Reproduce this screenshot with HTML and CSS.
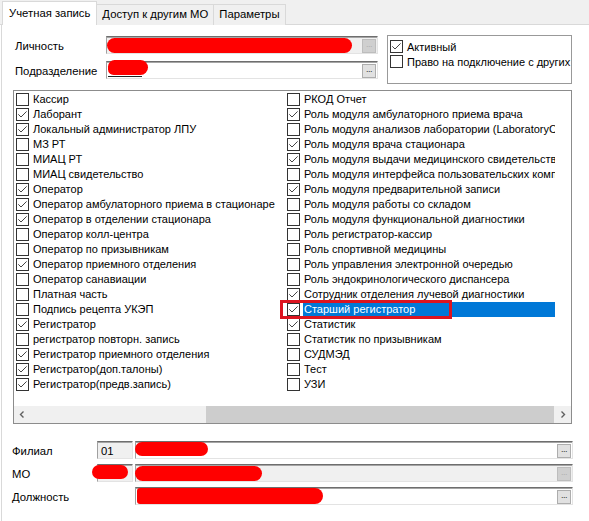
FILE: index.html
```html
<!DOCTYPE html>
<html lang="ru">
<head>
<meta charset="utf-8">
<title>Учетная запись</title>
<link rel="stylesheet" href="styles.css">
</head>
<body>
<div class="tabs">
  <div class="tab active">Учетная запись</div>
  <div class="tab">Доступ к другим МО</div>
  <div class="tab">Параметры</div>
</div>
<div class="panel">
  <div class="top">
    <div class="form">
      <div class="frow"><span class="lbl">Личность</span><div class="field dis wide"><span class="val"></span><span class="btn dis">...</span></div></div>
      <div class="frow"><span class="lbl">Подразделение</span><div class="field wide"><span class="val"></span><span class="btn">...</span></div></div>
    </div>
    <div class="group">
      <div class="gitem"><span class="cb on"></span><span>Активный</span></div>
      <div class="gitem"><span class="cb"></span><span>Право на подключение с других</span></div>
    </div>
  </div>
  <div class="list">
    <div class="items">
      <div class="it"><span class="cb"></span><span class="tx">Кассир</span></div>
      <div class="it"><span class="cb on"></span><span class="tx">Лаборант</span></div>
      <div class="it"><span class="cb on"></span><span class="tx">Локальный администратор ЛПУ</span></div>
      <div class="it"><span class="cb"></span><span class="tx">МЗ РТ</span></div>
      <div class="it"><span class="cb"></span><span class="tx">МИАЦ РТ</span></div>
      <div class="it"><span class="cb"></span><span class="tx">МИАЦ свидетельство</span></div>
      <div class="it"><span class="cb on"></span><span class="tx">Оператор</span></div>
      <div class="it"><span class="cb on"></span><span class="tx">Оператор амбулаторного приема в стационаре</span></div>
      <div class="it"><span class="cb on"></span><span class="tx">Оператор в отделении стационара</span></div>
      <div class="it"><span class="cb"></span><span class="tx">Оператор колл-центра</span></div>
      <div class="it"><span class="cb"></span><span class="tx">Оператор по призывникам</span></div>
      <div class="it"><span class="cb on"></span><span class="tx">Оператор приемного отделения</span></div>
      <div class="it"><span class="cb"></span><span class="tx">Оператор санавиации</span></div>
      <div class="it"><span class="cb"></span><span class="tx">Платная часть</span></div>
      <div class="it"><span class="cb"></span><span class="tx">Подпись рецепта УКЭП</span></div>
      <div class="it"><span class="cb on"></span><span class="tx">Регистратор</span></div>
      <div class="it"><span class="cb"></span><span class="tx">регистратор повторн. запись</span></div>
      <div class="it"><span class="cb on"></span><span class="tx">Регистратор приемного отделения</span></div>
      <div class="it"><span class="cb on"></span><span class="tx">Регистратор(доп.талоны)</span></div>
      <div class="it"><span class="cb on"></span><span class="tx">Регистратор(предв.запись)</span></div>

      <div class="it"><span class="cb"></span><span class="tx">РКОД Отчет</span></div>
      <div class="it"><span class="cb on"></span><span class="tx">Роль модуля амбулаторного приема врача</span></div>
      <div class="it"><span class="cb"></span><span class="tx">Роль модуля анализов лаборатории (LaboratoryClient)</span></div>
      <div class="it"><span class="cb on"></span><span class="tx">Роль модуля врача стационара</span></div>
      <div class="it"><span class="cb on"></span><span class="tx">Роль модуля выдачи медицинского свидетельства</span></div>
      <div class="it"><span class="cb"></span><span class="tx">Роль модуля интерфейса пользовательских компонентов</span></div>
      <div class="it"><span class="cb on"></span><span class="tx">Роль модуля предварительной записи</span></div>
      <div class="it"><span class="cb"></span><span class="tx">Роль модуля работы со складом</span></div>
      <div class="it"><span class="cb"></span><span class="tx">Роль модуля функциональной диагностики</span></div>
      <div class="it"><span class="cb"></span><span class="tx">Роль регистратор-кассир</span></div>
      <div class="it"><span class="cb"></span><span class="tx">Роль спортивной медицины</span></div>
      <div class="it"><span class="cb"></span><span class="tx">Роль управления электронной очередью</span></div>
      <div class="it"><span class="cb"></span><span class="tx">Роль эндокринологического диспансера</span></div>
      <div class="it"><span class="cb on"></span><span class="tx">Сотрудник отделения лучевой диагностики</span></div>
      <div class="it sel"><span class="cb on"></span><span class="tx">Старший регистратор</span></div>
      <div class="it"><span class="cb on"></span><span class="tx">Статистик</span></div>
      <div class="it"><span class="cb"></span><span class="tx">Статистик по призывникам</span></div>
      <div class="it"><span class="cb"></span><span class="tx">СУДМЭД</span></div>
      <div class="it"><span class="cb"></span><span class="tx">Тест</span></div>
      <div class="it"><span class="cb"></span><span class="tx">УЗИ</span></div>
    </div>
    <div class="hscroll">
      <span class="arr"><svg width="17" height="17" viewBox="0 0 17 17"><path d="M9.5 5.5 L6.5 8.5 L9.5 11.5" fill="none" stroke="#606060" stroke-width="1.4"/></svg></span>
      <span class="track"><span class="thumb"></span></span>
      <span class="arr"><svg width="17" height="17" viewBox="0 0 17 17"><path d="M7.5 5.5 L10.5 8.5 L7.5 11.5" fill="none" stroke="#606060" stroke-width="1.4"/></svg></span>
    </div>
  </div>
  <div class="bottom">
    <div class="brow"><span class="blbl">Филиал</span><div class="field dis small"><span class="val">01</span></div><div class="field big"><span class="val"></span><span class="btn">...</span></div></div>
    <div class="brow"><span class="blbl">МО</span><div class="field dis small"><span class="val"></span></div><div class="field dis big"><span class="val"></span><span class="btn dis">...</span></div></div>
    <div class="brow"><span class="blbl">Должность</span><div class="field big shift"><span class="val"></span><span class="btn">...</span></div></div>
  </div>
</div>

<div class="mark"></div>
<div class="blob b1"></div>
<div class="blob b2"></div>
<div class="uline"></div>
<div class="blob b3"></div>
<div class="blob b4"></div>
<div class="blob b5"></div>
<div class="blob b6"></div>
</body>
</html>
```

FILE: styles.css
```css
* { box-sizing: border-box; }
html, body { margin: 0; padding: 0; }
body {
  width: 589px;
  height: 521px;
  overflow: hidden;
  background: #ffffff;
  font-family: "Liberation Sans", Arial, sans-serif;
  font-size: 11px;
  color: #000;
  position: relative;
}

.tabs {
  height: 25px;
  background: #f0f0f0;
  border-bottom: 1px solid #d9d9d9;
  display: flex;
  align-items: flex-end;
  padding-left: 2px;
}
.tab {
  height: 21px;
  line-height: 19px;
  padding: 0 5px;
  border: 1px solid #d9d9d9;
  border-bottom: none;
  border-left: none;
  background: #f0f0f0;
  margin-bottom: -1px;
  font-size: 11.3px;
}
.tab.active {
  height: 24px;
  line-height: 22px;
  background: #fff;
  border-left: 1px solid #d9d9d9;
  padding: 0 6px 0 6px;
}

.panel {
  margin-left: 1px;
  border-left: 1px solid #d9d9d9;
  height: 496px;
}

.top {
  display: flex;
  align-items: flex-start;
  padding-top: 10px;
  padding-left: 13px;
}
.form {
  margin-top: 1px;
  display: flex;
  flex-direction: column;
  gap: 7px;
}
.frow {
  display: flex;
  align-items: center;
  height: 18px;
}
.lbl {
  width: 91px;
  padding-top: 2px;
  font-size: 11.3px;
}

.field {
  height: 18px;
  display: flex;
  align-items: center;
  background: #fff;
  border-style: solid;
  border-width: 1px;
  border-color: #6e6e6e #e3e3e3 #e3e3e3 #a0a0a0;
  box-shadow: inset 0 1px 0 #a5a5a5;
  padding: 0 1px 0 3px;
}
.field.dis { background: #f0f0f0; }
.field.wide { width: 272px; }
.val { flex: 1; padding-top: 1px; font-size: 11.3px; }
.btn {
  width: 14px;
  height: 14px;
  border: 1px solid #adadad;
  background: #e1e1e1;
  font-size: 9px;
  line-height: 9px;
  text-align: center;
  color: #333;
  letter-spacing: -0.5px;
  margin-top: 1px;
}
.btn.dis {
  background: #cfcfcf;
  border-color: #bdbdbd;
  color: #b0b0b0;
}

.group {
  margin-left: 9px;
  width: 185px;
  height: 49px;
  border: 1px solid #999;
  padding: 3px 0 0 2px;
  overflow: hidden;
}
.gitem {
  display: flex;
  align-items: center;
  height: 15px;
  white-space: nowrap;
}

.cb {
  flex: none;
  width: 13px;
  height: 13px;
  border: 1px solid #333;
  background: #fff;
  margin-right: 4px;
}
.cb.on {
  background: #fff url("data:image/svg+xml,%3Csvg xmlns='http://www.w3.org/2000/svg' width='11' height='11'%3E%3Cpath d='M1.3 5.3 L4 8 L9.6 2.4' fill='none' stroke='%23444' stroke-width='1'/%3E%3C/svg%3E") no-repeat 0 0;
}

.list {
  margin: 6px 0 0 11px;
  width: 559px;
  height: 334px;
  border: 1px solid #8c8c8c;
  display: flex;
  flex-direction: column;
}
.items {
  flex: 1;
  display: grid;
  grid-template-columns: 271px 271px;
  grid-template-rows: repeat(20, 15px);
  grid-auto-flow: column;
  padding: 1px 0 0 1px;
  align-content: start;
}
.it {
  display: flex;
  align-items: center;
  height: 15px;
  padding-left: 1px;
  overflow: hidden;
  white-space: nowrap;
}
.tx {
  flex: 1;
  overflow: hidden;
  height: 15px;
  line-height: 15px;
  margin-left: -1px;
  padding-left: 1px;
  margin-right: 2px;
}
.it.sel .tx {
  background: #0078d7;
  color: #fff;
}

.hscroll {
  height: 17px;
  display: flex;
  background: #f0f0f0;
}
.arr { width: 17px; height: 17px; flex: none; }
.arr svg { display: block; }
.track { flex: 1; display: flex; }
.thumb {
  margin-left: 175px;
  flex: 1;
  background: #cdcdcd;
}

.bottom {
  margin-top: 17px;
  padding-left: 10px;
  display: flex;
  flex-direction: column;
  gap: 5px;
}
.brow {
  display: flex;
  align-items: center;
  height: 18px;
  gap: 2px;
}
.blbl { width: 83px; padding-top: 2px; font-size: 11.3px; }
.field.small { width: 36px; }
.field.big { width: 438px; }
.field.shift { margin-left: 38px; }

.mark {
  position: absolute;
  left: 280px;
  top: 300px;
  width: 172px;
  height: 19px;
  border: 3px solid #dc1420;
}
.blob {
  position: absolute;
  background: #ff0000;
  border-radius: 8px;
}
.b1 { left: 107px; top: 38px; width: 245px; height: 15px; }
.b2 { left: 108px; top: 60px; width: 40px; height: 15px; border-radius: 7px 8px 8px 6px; }
.uline { position: absolute; left: 108px; top: 76px; width: 34px; height: 1px; background: #222; }
.b3 { left: 135px; top: 442px; width: 73px; height: 14px; }
.b4 { left: 92px; top: 465px; width: 36px; height: 14px; }
.b5 { left: 135px; top: 466px; width: 127px; height: 15px; }
.b6 { left: 137px; top: 488px; width: 186px; height: 16px; border-radius: 3px 8px 8px 3px; }
```
